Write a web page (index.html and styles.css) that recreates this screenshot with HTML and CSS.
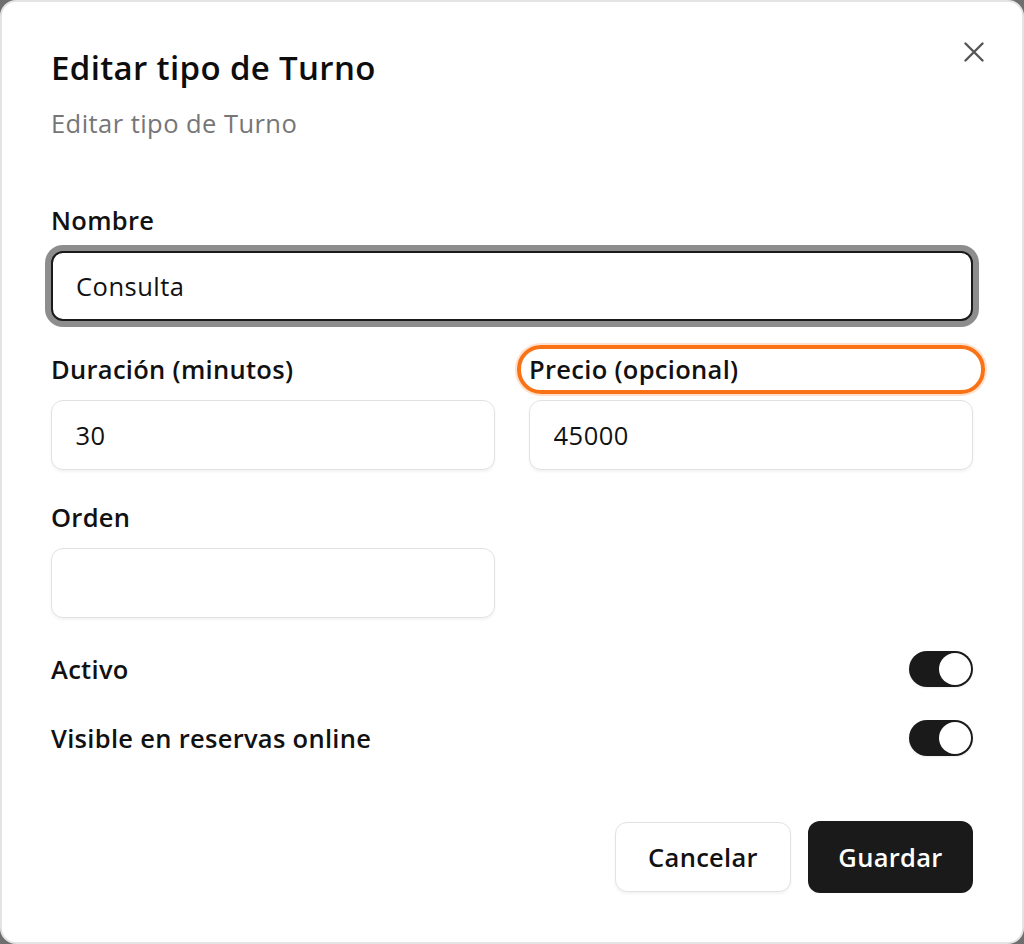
FILE: index.html
```html
<!DOCTYPE html>
<html lang="es">
<head>
<meta charset="utf-8">
<title>Editar tipo de Turno</title>
<link rel="stylesheet" href="styles.css">
</head>
<body>
<div class="dialog">
  <button class="close" type="button" aria-label="Cerrar">
    <svg viewBox="0 0 20 20" width="20" height="20"><path d="M1.5 1.5 L18.5 18.5 M18.5 1.5 L1.5 18.5" fill="none" stroke="currentColor" stroke-width="2.4" stroke-linecap="round"/></svg>
  </button>
  <header class="header">
    <h2 class="title">Editar tipo de Turno</h2>
    <p class="desc">Editar tipo de Turno</p>
  </header>
  <form class="form">
    <div class="field">
      <label class="label">Nombre</label>
      <input class="input focused" type="text" value="Consulta">
    </div>
    <div class="row2">
      <div class="field">
        <label class="label">Duración (minutos)</label>
        <input class="input" type="text" value="30">
      </div>
      <div class="field">
        <label class="label highlighted">Precio (opcional)</label>
        <input class="input" type="text" value="45000">
      </div>
    </div>
    <div class="field half">
      <label class="label">Orden</label>
      <input class="input" type="text" value="">
    </div>
    <div class="switches">
      <div class="switch-row">
        <span class="label">Activo</span>
        <span class="switch"><span class="thumb"></span></span>
      </div>
      <div class="switch-row">
        <span class="label">Visible en reservas online</span>
        <span class="switch"><span class="thumb"></span></span>
      </div>
    </div>
    <div class="footer">
      <button class="btn btn-outline" type="button">Cancelar</button>
      <button class="btn btn-primary" type="button">Guardar</button>
    </div>
  </form>
</div>
</body>
</html>
```
FILE: styles.css
```css
* { box-sizing: border-box; }
html, body { margin: 0; padding: 0; }
body {
  background: #6f6f6f;
  font-family: "Open Sans", "Noto Sans", sans-serif;
  color: #111111;
  width: 1024px;
  height: 944px;
  overflow: hidden;
}
.dialog {
  position: relative;
  width: 1024px;
  height: 944px;
  background: #ffffff;
  border: 2px solid #e4e4e4;
  border-radius: 16px;
  padding: 47px 49px 0 49px;
}
.close {
  position: absolute;
  top: 40px;
  right: 38px;
  width: 20px;
  height: 20px;
  padding: 0;
  border: 0;
  background: transparent;
  color: #555555;
  display: block;
}
.close svg { display: block; }
.header { display: flex; flex-direction: column; }
.title {
  margin: 0;
  font-size: 33px;
  line-height: 38px;
  font-weight: 600;
  letter-spacing: 0.35px;
  color: #0d0d0d;
}
.desc {
  margin: 21px 0 0 0;
  font-size: 25.5px;
  line-height: 30px;
  letter-spacing: 0.45px;
  color: #767676;
}
.form {
  margin-top: 70px;
  display: flex;
  flex-direction: column;
}
.field {
  display: flex;
  flex-direction: column;
  gap: 18px;
}
.label {
  font-size: 25.5px;
  line-height: 25px;
  font-weight: 600;
  letter-spacing: 0.3px;
  color: #111111;
}
.input {
  height: 70px;
  width: 100%;
  border: 1.5px solid #e2e2e2;
  border-radius: 12px;
  padding: 0 23.5px;
  font-family: inherit;
  font-size: 25.5px;
  letter-spacing: 0.5px;
  color: #111111;
  background: #ffffff;
  box-shadow: 0 2px 3px rgba(0, 0, 0, 0.05);
  outline: none;
}
.input.focused {
  border: 2px solid #1a1a1a;
  padding: 0 23px;
  box-shadow: 0 0 0 6px #8d8d8d;
}
.row2 {
  margin-top: 36px;
  display: grid;
  grid-template-columns: 1fr 1fr;
  gap: 34px;
}
.half {
  margin-top: 35px;
  width: 444px;
}
.highlighted {
  position: relative;
  border-radius: 14px;
}
.highlighted::after {
  content: "";
  position: absolute;
  top: -12px;
  bottom: -12px;
  left: -12px;
  right: -12px;
  border: 4px solid #f97316;
  border-radius: 24px;
  box-shadow: 0 0 0 2px rgba(249, 115, 22, 0.22);
  pointer-events: none;
}
.switches {
  margin-top: 33px;
  display: flex;
  flex-direction: column;
  gap: 33px;
}
.switch-row {
  display: flex;
  align-items: center;
  justify-content: space-between;
  height: 36px;
}
.switch {
  width: 64px;
  height: 36px;
  border-radius: 18px;
  background: #1a1a1a;
  display: flex;
  align-items: center;
  justify-content: flex-end;
  padding: 2px;
  box-shadow: 0 1px 2px rgba(0, 0, 0, 0.08);
}
.thumb {
  width: 32px;
  height: 32px;
  border-radius: 50%;
  background: #ffffff;
}
.footer {
  margin-top: 65px;
  display: flex;
  justify-content: flex-end;
  align-items: center;
  gap: 17px;
}
.btn {
  font-family: inherit;
  font-size: 25.5px;
  font-weight: 600;
  letter-spacing: 0.3px;
  border-radius: 12px;
  cursor: pointer;
}
.btn-outline {
  width: 176px;
  height: 70px;
  background: #ffffff;
  color: #111111;
  border: 1.5px solid #e2e2e2;
  box-shadow: 0 2px 3px rgba(0, 0, 0, 0.05);
}
.btn-primary {
  width: 165px;
  height: 72px;
  background: #1a1a1a;
  color: #ffffff;
  border: 0;
}
```
